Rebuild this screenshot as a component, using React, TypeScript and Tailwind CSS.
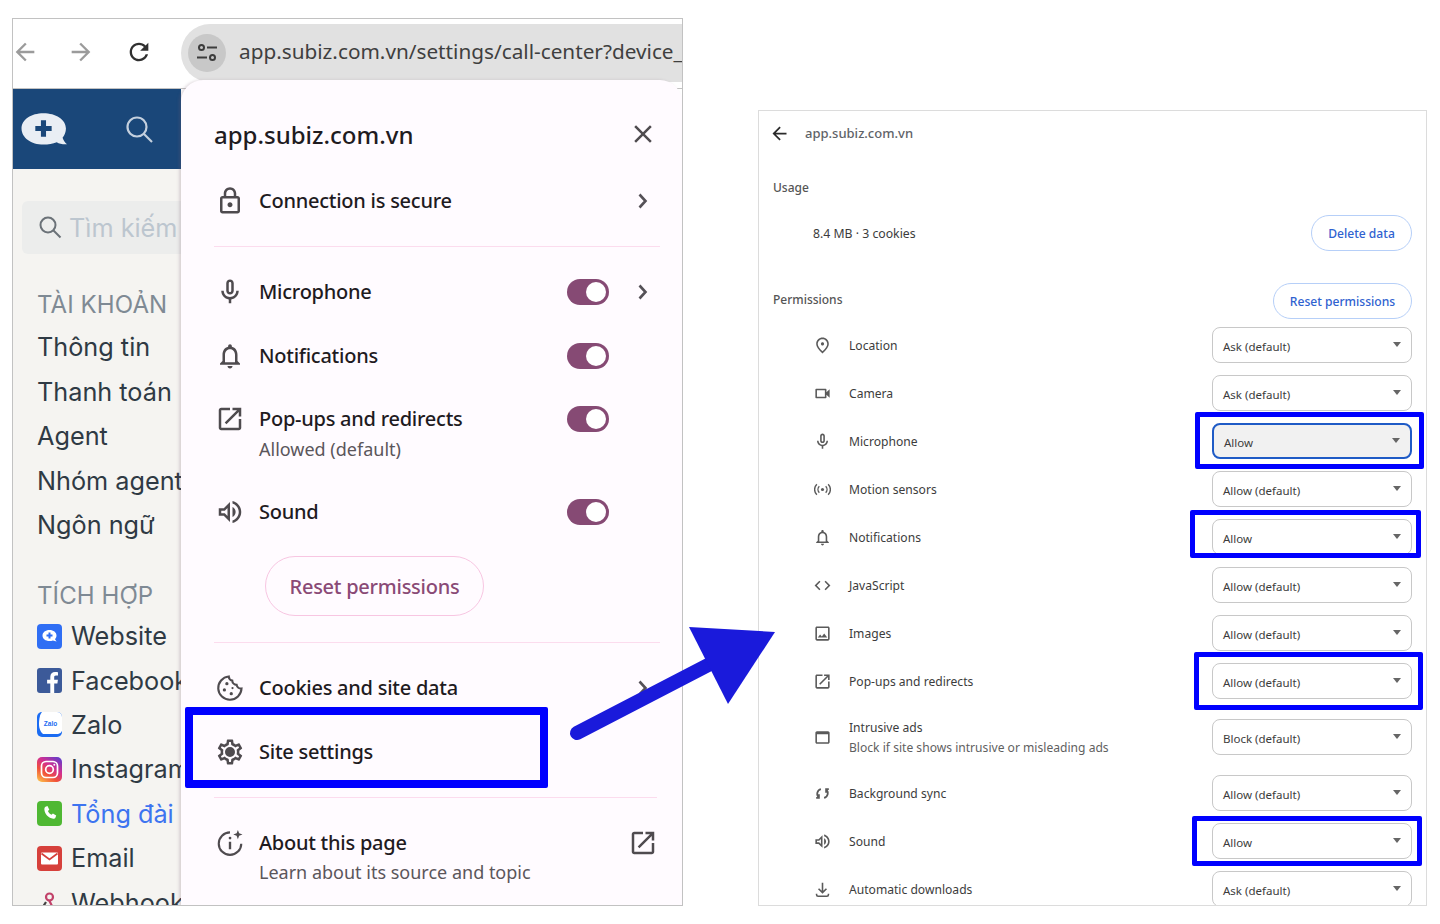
import React from "react";

const P = {
  mic: "M12 14c1.66 0 3-1.34 3-3V5c0-1.66-1.34-3-3-3S9 3.34 9 5v6c0 1.66 1.34 3 3 3zm-1-9c0-.55.45-1 1-1s1 .45 1 1v6c0 .55-.45 1-1 1s-1-.45-1-1V5zm6 6c0 2.76-2.24 5-5 5s-5-2.24-5-5H5c0 3.53 2.61 6.43 6 6.92V21h2v-3.08c3.39-.49 6-3.39 6-6.92h-2z",
  bell: "M12 22c1.1 0 2-.9 2-2h-4c0 1.1.9 2 2 2zm6-6v-5c0-3.07-1.63-5.64-4.5-6.32V4c0-.83-.67-1.5-1.5-1.5s-1.5.67-1.5 1.5v.68C7.64 5.36 6 7.92 6 11v5l-2 2v1h16v-1l-2-2zm-2 1H8v-6c0-2.48 1.51-4.5 4-4.5s4 2.02 4 4.5v6z",
  open: "M19 19H5V5h7V3H5c-1.11 0-2 .9-2 2v14c0 1.1.89 2 2 2h14c1.1 0 2-.9 2-2v-7h-2v7zM14 3v2h3.59l-9.83 9.83 1.41 1.41L19 6.41V10h2V3h-7z",
  sound: "M3 9v6h4l5 5V4L7 9H3zm7-.17v6.34L7.83 13H5v-2h2.83L10 8.83zM16.5 12c0-1.77-1.02-3.29-2.5-4.03v8.05c1.48-.73 2.5-2.25 2.5-4.02zM14 3.23v2.06c2.89.86 5 3.54 5 6.71s-2.11 5.85-5 6.71v2.06c4.01-.91 7-4.49 7-8.77 0-4.28-2.99-7.86-7-8.77z",
  lock: "M18 8h-1V6c0-2.76-2.24-5-5-5S7 3.24 7 6v2H6c-1.1 0-2 .9-2 2v10c0 1.1.9 2 2 2h12c1.1 0 2-.9 2-2V10c0-1.1-.9-2-2-2zM9 6c0-1.66 1.34-3 3-3s3 1.34 3 3v2H9V6zm9 14H6V10h12v10zm-6-3c1.1 0 2-.9 2-2s-.9-2-2-2-2 .9-2 2 .9 2 2 2z",
  gear: "M19.43 12.98c.04-.32.07-.64.07-.98s-.03-.66-.07-.98l2.11-1.65c.19-.15.24-.42.12-.64l-2-3.46c-.12-.22-.39-.3-.61-.22l-2.49 1c-.52-.4-1.08-.73-1.69-.98l-.38-2.65C14.46 2.18 14.25 2 14 2h-4c-.25 0-.46.18-.49.42l-.38 2.65c-.61.25-1.17.59-1.69.98l-2.49-1c-.23-.09-.49 0-.61.22l-2 3.46c-.13.22-.07.49.12.64l2.11 1.65c-.04.32-.07.65-.07.98s.03.66.07.98l-2.11 1.65c-.19.15-.24.42-.12.64l2 3.46c.12.22.39.3.61.22l2.49-1c.52.4 1.08.73 1.69.98l.38 2.65c.03.24.24.42.49.42h4c.25 0 .46-.18.49-.42l.38-2.65c.61-.25 1.17-.59 1.69-.98l2.49 1c.23.09.49 0 .61-.22l2-3.46c.12-.22.07-.49-.12-.64l-2.11-1.65zM17.45 11.27c.04.31.05.52.05.73 0 .21-.02.43-.05.73l-.14 1.13.89.7 1.08.84-.7 1.21-1.27-.51-1.04-.42-.9.68c-.43.32-.84.56-1.25.73l-1.06.43-.16 1.13-.2 1.35h-1.4l-.19-1.35-.16-1.13-1.06-.43c-.43-.18-.83-.41-1.23-.71l-.91-.7-1.06.43-1.27.51-.7-1.21 1.08-.84.89-.7-.14-1.13c-.03-.31-.05-.54-.05-.74s.02-.43.05-.73l.14-1.13-.89-.7-1.08-.84.7-1.21 1.27.51 1.04.42.9-.68c.43-.32.84-.56 1.25-.73l1.06-.43.16-1.13.2-1.35h1.39l.19 1.35.16 1.13 1.06.43c.43.18.83.41 1.23.71l.91.7 1.06-.43 1.27-.51.7 1.21-1.07.85-.89.7.14 1.13zM12 8a4 4 0 1 0 0 8 4 4 0 0 0 0-8z",
  pin: "M12 12c-1.1 0-2-.9-2-2s.9-2 2-2 2 .9 2 2-.9 2-2 2zm6-1.8C18 6.57 15.35 4 12 4s-6 2.57-6 6.2c0 2.34 1.95 5.44 6 9.14 4.05-3.7 6-6.8 6-9.14zM12 2c4.2 0 8 3.22 8 8.2 0 3.32-2.67 7.25-8 11.8-5.33-4.55-8-8.48-8-11.8C4 5.22 7.8 2 12 2z",
  cam: "M15 8v8H5V8h10m1-2H4c-.55 0-1 .45-1 1v10c0 .55.45 1 1 1h12c.55 0 1-.45 1-1v-3.5l4 4v-11l-4 4V7c0-.55-.45-1-1-1z",
  code: "M9.4 16.6 4.8 12l4.6-4.6L8 6l-6 6 6 6 1.4-1.4zm5.2 0 4.6-4.6-4.6-4.6L16 6l6 6-6 6-1.4-1.4z",
  image: "M19 5v14H5V5h14m0-2H5c-1.1 0-2 .9-2 2v14c0 1.1.9 2 2 2h14c1.1 0 2-.9 2-2V5c0-1.1-.9-2-2-2zm-4.86 8.86-3 3.87L9 13.14 6 17h12l-3.86-5.14z",
  ads: "M19 4H5c-1.11 0-2 .9-2 2v12c0 1.1.89 2 2 2h14c1.1 0 2-.9 2-2V6c0-1.1-.89-2-2-2zm0 14H5V8h14v10z",
  back: "M20 11H7.83l5.59-5.59L12 4l-8 8 8 8 1.41-1.41L7.83 13H20v-2z",
  forward: "M4 11h12.170l-5.590-5.590L12 4l8 8-8 8-1.410-1.410L16.170 13H4z",
  close: "M19 6.41 17.59 5 12 10.59 6.41 5 5 6.41 10.59 12 5 17.59 6.41 19 12 13.41 17.59 19 19 17.59 13.41 12z",
  refresh: "M17.65 6.35C16.2 4.9 14.21 4 12 4c-4.42 0-7.99 3.58-7.99 8s3.57 8 7.99 8c3.73 0 6.84-2.55 7.73-6h-2.08c-.82 2.33-3.04 4-5.65 4-3.31 0-6-2.69-6-6s2.69-6 6-6c1.66 0 3.14.69 4.22 1.78L13 11h7V4l-2.35 2.35z",
};

function Ic({ d, size = 30, color = "#4f4b4f" }: { d: string; size?: number; color?: string }) {
  return (
    <svg width={size} height={size} viewBox="0 0 24 24" fill={color} fillRule="evenodd" className="shrink-0">
      <path d={d} />
    </svg>
  );
}

function Chevron() {
  return (
    <svg width="30" height="30" viewBox="0 0 30 30" fill="none" stroke="#555157" strokeWidth="2.6" className="shrink-0">
      <path d="M11.5 8.5 17.5 15 11.5 21.5" />
    </svg>
  );
}

function CookieIcon() {
  return (
    <svg width="30" height="30" viewBox="0 0 24 24" fill="none" stroke="#4f4b4f" strokeWidth="1.7">
      <path d="M11 2.8a9.3 9.3 0 1 0 10.2 9.6 3.6 3.6 0 0 1-3.9-2.9 3.6 3.6 0 0 1-3.5-3.4A3.6 3.6 0 0 1 11 2.8z" />
      <circle cx="9.5" cy="8.5" r="1.3" fill="#4f4b4f" stroke="none" />
      <circle cx="7.5" cy="13.5" r="1.3" fill="#4f4b4f" stroke="none" />
      <circle cx="13" cy="16.5" r="1.3" fill="#4f4b4f" stroke="none" />
      <circle cx="14" cy="12" r="0.9" fill="#4f4b4f" stroke="none" />
    </svg>
  );
}

function AboutIcon() {
  return (
    <svg width="30" height="30" viewBox="0 0 24 24" fill="none" stroke="#4f4b4f" strokeWidth="1.7">
      <path d="M12 3.5a9 9 0 1 0 9 9" />
      <path d="M12 11v6" strokeWidth="1.9" />
      <circle cx="12" cy="8" r="1.1" fill="#4f4b4f" stroke="none" />
      <path d="M18.3 1.5l1 2.7 2.7 1-2.7 1-1 2.7-1-2.7-2.7-1 2.7-1z" fill="#4f4b4f" stroke="none" />
    </svg>
  );
}

function Toggle({ extra = "" }: { extra?: string }) {
  return (
    <div className={"flex h-[26px] w-[42px] shrink-0 items-center justify-end rounded-full bg-[#864a74] pr-[3px] " + extra}>
      <div className="h-[20px] w-[20px] rounded-full bg-white" />
    </div>
  );
}

const labelCls = "text-[20px] font-medium tracking-[-0.25px] text-[#1f1b1f]";

function PopRow({ icon, label, right, chevron }: { icon: React.ReactNode; label: string; right?: React.ReactNode; chevron?: boolean }) {
  return (
    <div className="flex h-[64px] items-center pl-[33px] pr-6">
      <div className="flex w-8 justify-center">{icon}</div>
      <div className={"ml-[13px] flex-1 " + labelCls}>{label}</div>
      {right}
      <div className="ml-[19px] w-[30px]">{chevron ? <Chevron /> : null}</div>
    </div>
  );
}

function Popup() {
  return (
    <div className="relative z-10 -mt-[9px] h-[826px] w-[501px] shrink-0 rounded-t-[22px] bg-[#fffbff] shadow-[-2px_0_3px_rgba(120,90,110,0.22)]">
      <div className="flex h-[100px] items-start pl-[33px] pr-6 pt-[35px]">
        <div className="flex-1 text-[24px] font-medium leading-[40px] text-[#1f1b1f]">app.subiz.com.vn</div>
        <div className="mt-[4px]"><Ic d={P.close} color="#4f4b4f" /></div>
      </div>
      <div className="flex h-[42px] items-center pl-[33px] pr-6">
        <div className="flex w-8 justify-center"><Ic d={P.lock} /></div>
        <div className={"ml-[13px] flex-1 " + labelCls}>Connection is secure</div>
        <Chevron />
      </div>
      <div className="ml-[33px] mt-[24px] mb-[13px] h-px w-[446px] bg-[#fcdcee]" />
      <PopRow icon={<Ic d={P.mic} />} label="Microphone" right={<Toggle />} chevron />
      <PopRow icon={<Ic d={P.bell} />} label="Notifications" right={<Toggle />} />
      <div className="flex h-[92px] items-start pl-[33px] pr-6 pt-[16px]">
        <div className="flex w-8 justify-center"><Ic d={P.open} /></div>
        <div className="ml-[13px] flex-1">
          <div className={"leading-[30px] " + labelCls}>Pop-ups and redirects</div>
          <div className="text-[18px] leading-[30px] text-[#5b565b]">Allowed (default)</div>
        </div>
        <Toggle extra="mt-[2px]" />
        <div className="ml-[19px] w-[30px]" />
      </div>
      <PopRow icon={<Ic d={P.sound} />} label="Sound" right={<Toggle />} />
      <div className="ml-[84px] mt-[12px] flex h-[60px] w-[219px] items-center justify-center rounded-full border border-[#f8c6e2] pt-[2px] text-[20px] font-medium tracking-[-0.25px] text-[#8a4a76]">
        Reset permissions
      </div>
      <div className="ml-[33px] mt-[26px] mb-[13px] h-px w-[446px] bg-[#fcdcee]" />
      <PopRow icon={<CookieIcon />} label="Cookies and site data" chevron />
      <PopRow icon={<Ic d={P.gear} />} label="Site settings" />
      <div className="ml-[33px] mt-[13px] h-px w-[443px] bg-[#fcdcee]" />
      <div className="flex items-start pl-[33px] pr-6 pt-[30px]">
        <div className="flex w-8 justify-center"><AboutIcon /></div>
        <div className="ml-[13px] flex-1">
          <div className={"leading-[30px] " + labelCls}>About this page</div>
          <div className="-mt-[1px] text-[18px] leading-[30px] text-[#5b565b]">Learn about its source and topic</div>
        </div>
        <Ic d={P.open} />
      </div>
    </div>
  );
}

function LogoWebsite() {
  return (
    <svg width="25" height="25" viewBox="0 0 25 25" className="shrink-0">
      <rect width="25" height="25" rx="4" fill="#2f6ef4" />
      <path d="M12.5 6c4 0 7 2.3 7 5.6 0 1.5-.6 2.7-1.5 3.6l1.6 2.4-3.7-1.1c-1.1.4-2.2.6-3.4.6-4 0-7-2.2-7-5.5S8.5 6 12.5 6z" fill="#fff" />
      <path d="M12.5 8.5v6M9.5 11.5h6" stroke="#2f6ef4" strokeWidth="2" />
    </svg>
  );
}
function LogoFacebook() {
  return (
    <svg width="25" height="25" viewBox="0 0 25 25" className="shrink-0">
      <rect width="25" height="25" rx="3" fill="#3c5a99" />
      <path d="M17.2 25v-9.6h3.2l.5-3.7h-3.700V9.300c0-1.100.3-1.800 1.800-1.800h2V4.200c-.4 0-1.500-.2-2.900-.2-2.800 0-4.800 1.700-4.800 4.900v2.800h-3.200v3.700h3.200V25z" fill="#fff" />
    </svg>
  );
}
function LogoZalo() {
  return (
    <svg width="25" height="25" viewBox="0 0 25 25" className="shrink-0">
      <rect width="25" height="25" rx="5" fill="#1b6cf2" />
      <path d="M5 0h15a5 5 0 0 1 5 5v14a5 5 0 0 1-4 3H6c-2-1.5-4-5-4-10S3 2 5 0z" fill="#fff" />
      <text x="13.5" y="14" fontSize="6.500" textAnchor="middle" fill="#1b6cf2" fontWeight="700" fontFamily="Liberation Sans, sans-serif">Zalo</text>
    </svg>
  );
}
function LogoInstagram() {
  return (
    <svg width="25" height="25" viewBox="0 0 25 25" className="shrink-0">
      <defs>
        <linearGradient id="ig" x1="0.1" y1="1" x2="0.8" y2="0">
          <stop offset="0" stopColor="#fdc04a" />
          <stop offset="0.35" stopColor="#f0503a" />
          <stop offset="0.65" stopColor="#d12f91" />
          <stop offset="1" stopColor="#6a3bc6" />
        </linearGradient>
      </defs>
      <rect width="25" height="25" rx="5" fill="url(#ig)" />
      <rect x="4.5" y="4.5" width="16" height="16" rx="4.5" fill="none" stroke="#fff" strokeWidth="1.7" />
      <circle cx="12.5" cy="12.5" r="3.8" fill="none" stroke="#fff" strokeWidth="1.7" />
      <circle cx="17.3" cy="7.7" r="1" fill="#fff" />
    </svg>
  );
}
function LogoPhone() {
  return (
    <svg width="25" height="25" viewBox="0 0 25 25" className="shrink-0">
      <rect width="25" height="25" rx="4" fill="#4fb833" />
      <path d="M8.5 5.800l2-.8 1.800 3.700-1.400 1.300c.6 1.500 1.900 3 3.600 3.800l1.400-1.400 3.300 2-.8 2.300c-.4.800-1.300 1.200-2.200 1.100-4.600-.7-8.300-4.400-8.800-9-.1-1 .2-2.500 1.100-3z" fill="#fff" />
    </svg>
  );
}
function LogoEmail() {
  return (
    <svg width="25" height="25" viewBox="0 0 25 25" className="shrink-0">
      <rect width="25" height="25" rx="4" fill="#d6403b" />
      <rect x="4" y="6.5" width="17" height="12" rx="1" fill="#fff" />
      <path d="M4.5 7.500l8 6 8-6" fill="none" stroke="#d6403b" strokeWidth="1.7" />
    </svg>
  );
}
function LogoWebhook() {
  return (
    <svg width="25" height="25" viewBox="0 0 25 25" fill="none" strokeWidth="2.2" className="shrink-0">
      <circle cx="12.5" cy="7" r="3.5" stroke="#c2426a" />
      <path d="M12 10l4 8h6" stroke="#c2426a" />
      <path d="M9 12l-5 8h11" stroke="#444" />
    </svg>
  );
}

function Sidebar() {
  const account = ["Thông tin", "Thanh toán", "Agent", "Nhóm agent", "Ngôn ngữ"];
  const integ: [React.ReactNode, string, string][] = [
    [<LogoWebsite />, "Website", "text-[#2f3a44]"],
    [<LogoFacebook />, "Facebook", "text-[#2f3a44]"],
    [<LogoZalo />, "Zalo", "text-[#2f3a44]"],
    [<LogoInstagram />, "Instagram", "text-[#2f3a44]"],
    [<LogoPhone />, "Tổng đài", "text-[#3d74f0]"],
    [<LogoEmail />, "Email", "text-[#2f3a44]"],
    [<LogoWebhook />, "Webhook", "text-[#2f3a44]"],
  ];
  return (
    <div className="h-[817px] w-[168px] shrink-0 overflow-hidden bg-[#f5f4f1] whitespace-nowrap [font-family:Inter,sans-serif]">
      <div className="flex h-[80px] items-center bg-[#1a4779] pl-[7px]">
        <svg width="49" height="41" viewBox="0 0 48 40" className="shrink-0">
          <path d="M23 4c12 0 22 6 22 15 0 3.500-1.300 6.500-3.300 9 .6 2 2 4.500 4.300 6.500-4 .3-7.500-.5-10-2-3.800 1.500-8.300 2.300-13 2.300C11 34.800 1.500 28 1.500 19S11 4 23 4z" fill="#e9eef4" />
          <path d="M23 11v16M15 19h16" stroke="#1a4779" strokeWidth="5" />
        </svg>
        <svg className="ml-[55px] shrink-0" width="30" height="30" viewBox="0 0 30 30" fill="none" stroke="#c4d0de" strokeWidth="2.2">
          <circle cx="13" cy="13" r="9.5" />
          <path d="M20 20l8 8" />
        </svg>
      </div>
      <div className="ml-[9px] mt-[32px] flex h-[53px] items-center rounded-l-md bg-[#ecedec] pl-[16px]">
        <svg width="24" height="24" viewBox="0 0 24 24" fill="none" stroke="#6b7278" strokeWidth="2" className="-mt-[2px] shrink-0">
          <circle cx="10" cy="10" r="7.5" />
          <path d="M15.500 15.500l7 7" />
        </svg>
        <span className="ml-[7px] pt-[3px] text-[25.25px] text-[#bcc6cf]">Tìm kiếm</span>
      </div>
      <div className="mt-[28px] flex h-[43px] items-center pl-[24px] pt-[2px] text-[24px] tracking-[0.1px] text-[#7f8a94]">TÀI KHOẢN</div>
      {account.map((t) => (
        <div key={t} className="flex h-[44.5px] items-center pl-[24px] pt-[2px] text-[25.25px] text-[#2f3a44]">{t}</div>
      ))}
      <div className="mt-[27.5px] flex h-[39px] items-center pl-[24px] pt-[2px] text-[24px] tracking-[0.1px] text-[#7f8a94]">TÍCH HỢP</div>
      {integ.map(([logo, t, cls]) => (
        <div key={t} className="flex h-[44.4px] items-center pl-[24px]">
          {logo}
          <span className={"ml-[9px] pt-[2px] text-[25.25px] " + cls}>{t}</span>
        </div>
      ))}
    </div>
  );
}

function LeftWindow() {
  return (
    <div className="ml-[12px] mt-[18px] h-[888px] w-[671px] shrink-0 overflow-hidden border border-[#c2c2c2] bg-white [font-family:'Noto_Sans',sans-serif]">
      <div className="flex h-[70px] items-start border-b border-[#c2c2c2] bg-white">
        <div className="-ml-[2px] mt-[19px] flex items-center">
          <Ic d={P.back} size={28} color="#9b9b9b" />
          <div className="ml-[28px]"><Ic d={P.forward} size={28} color="#9b9b9b" /></div>
          <div className="ml-[30px]"><Ic d={P.refresh} size={28} color="#303030" /></div>
        </div>
        <div className="ml-[28px] mt-[5px] flex h-[58px] min-w-0 flex-1 items-center overflow-hidden whitespace-nowrap rounded-l-full bg-[#e1e1e1] pl-[7px]">
          <div className="flex h-[38px] w-[38px] shrink-0 items-center justify-center rounded-full bg-[#c8c8c8]">
            <svg width="24" height="24" viewBox="0 0 24 24" fill="none" stroke="#3c3c3c" strokeWidth="2">
              <circle cx="6.5" cy="6.5" r="2.5" />
              <path d="M12 6.500h10M2 16.500h10" />
              <circle cx="17.5" cy="16.5" r="2.5" />
            </svg>
          </div>
          <span className="ml-[13px] pb-[3px] text-[20.75px] text-[#3f3f3f]">app.subiz.com.vn/settings/call-center?device_</span>
        </div>
      </div>
      <div className="flex">
        <Sidebar />
        <Popup />
      </div>
    </div>
  );
}

function Select({ value, focus }: { value: string; focus?: boolean }) {
  return (
    <div className={"flex h-[36px] w-[200px] shrink-0 items-center justify-between rounded-lg px-[10px] " + (focus ? "border-2 border-[#1f5bc6] bg-[#f1f1f1]" : "border border-[#c8c8c8] bg-white")}>
      <span className="pt-[3px] text-[11.5px] text-[#3c3c3c]">{value}</span>
      <svg width="8" height="5" viewBox="0 0 10 6" className="-mt-[2px]"><path d="M0 0h10L5 6z" fill="#666" /></svg>
    </div>
  );
}

function PermRow({ icon, label, sub, value, focus, tall }: { icon: React.ReactNode; label: string; sub?: string; value: string; focus?: boolean; tall?: boolean }) {
  return (
    <div className={"flex items-center " + (tall ? "h-[64px]" : "h-[48px]")}>
      <div className="ml-[39px] flex w-[20px] shrink-0 justify-center">{icon}</div>
      <div className="ml-[17px] flex-1 pt-[2px]">
        <div className={"text-[12.1px] text-[#3c3c3c] " + (sub ? "leading-[20px]" : "")}>{label}</div>
        {sub ? <div className="text-[12.1px] leading-[20px] text-[#5f5f5f]">{sub}</div> : null}
      </div>
      <Select value={value} focus={focus} />
    </div>
  );
}

const I = ({ d }: { d: string }) => <Ic d={d} size={19} color="#5a5a5a" />;

function RightWindow() {
  return (
    <div className="ml-[75px] mt-[110px] h-[796px] w-[669px] shrink-0 overflow-hidden border border-[#dcdcdc] bg-white pl-[14px] pr-[14px] [font-family:'Noto_Sans',sans-serif]">
      <div className="flex h-[44px] items-center">
        <div className="-ml-[4px]"><Ic d={P.back} size={21} color="#2b2b2b" /></div>
        <span className="ml-[15px] pt-[2px] text-[13px] font-medium text-[#5f6368]">app.subiz.com.vn</span>
      </div>
      <div className="mt-[22px] flex h-[20px] items-center pt-[2px] text-[12px] font-medium text-[#555]">Usage</div>
      <div className="mt-[18px] flex h-[36px] items-center justify-between">
        <span className="ml-[40px] pt-[2px] text-[12.25px] text-[#3c3c3c]">8.4 MB · 3 cookies</span>
        <div className="flex h-[36px] w-[101px] items-center justify-center rounded-full border border-[#b6cff8] pt-[2px] text-[12.1px] font-medium text-[#2f62d0]">Delete data</div>
      </div>
      <div className="mt-[32px] flex h-[36px] justify-between">
        <span className="mt-[8px] text-[12px] font-medium text-[#555]">Permissions</span>
        <div className="flex h-[36px] w-[139px] items-center justify-center rounded-full border border-[#b6cff8] pt-[2px] text-[12.1px] font-medium text-[#2f62d0]">Reset permissions</div>
      </div>
      <div className="mt-[2px]">
        <PermRow icon={<I d={P.pin} />} label="Location" value="Ask (default)" />
        <PermRow icon={<I d={P.cam} />} label="Camera" value="Ask (default)" />
        <PermRow icon={<I d={P.mic} />} label="Microphone" value="Allow" focus />
        <PermRow
          icon={
            <svg width="17" height="17" viewBox="0 0 24 24" fill="none" stroke="#5a5a5a" strokeWidth="2">
              <circle cx="12" cy="12" r="2.2" fill="#5a5a5a" stroke="none" />
              <path d="M7.5 7.5a6.400 6.400 0 0 0 0 9M16.5 7.5a6.400 6.400 0 0 1 0 9M4 4.500a10.600 10.600 0 0 0 0 15M20 4.500a10.600 10.600 0 0 1 0 15" />
            </svg>
          }
          label="Motion sensors"
          value="Allow (default)"
        />
        <PermRow icon={<I d={P.bell} />} label="Notifications" value="Allow" />
        <PermRow icon={<I d={P.code} />} label="JavaScript" value="Allow (default)" />
        <PermRow icon={<I d={P.image} />} label="Images" value="Allow (default)" />
        <PermRow icon={<I d={P.open} />} label="Pop-ups and redirects" value="Allow (default)" />
        <PermRow icon={<I d={P.ads} />} label="Intrusive ads" sub="Block if site shows intrusive or misleading ads" value="Block (default)" tall />
        <PermRow
          icon={
            <svg width="19" height="19" viewBox="0 0 24 24" fill="none" stroke="#5a5a5a" strokeWidth="2.2">
              <path d="M10 6.500a6 6 0 0 0-2.500 10.500M7.500 13v4.500H4" />
              <path d="M14 17.500a6 6 0 0 0 2.500-10.500M16.500 11V6.500H20" />
            </svg>
          }
          label="Background sync"
          value="Allow (default)"
        />
        <PermRow icon={<I d={P.sound} />} label="Sound" value="Allow" />
        <PermRow
          icon={
            <svg width="19" height="19" viewBox="0 0 24 24" fill="none" stroke="#5a5a5a" strokeWidth="2">
              <path d="M12 3.500v12M7 11l5 5 5-5M4.500 17.500v1a2 2 0 0 0 2 2h11a2 2 0 0 0 2-2v-1" />
            </svg>
          }
          label="Automatic downloads"
          value="Ask (default)"
        />
      </div>
    </div>
  );
}

export default function App() {
  return (
    <div className="relative flex h-[924px] w-[1440px] items-start overflow-hidden bg-white">
      <LeftWindow />
      <RightWindow />
      <div className="absolute left-[185px] top-[707px] z-20 h-[81px] w-[363px] rounded-[2px] border-[8px] border-[#0000ff]" />
      <div className="absolute left-[1195px] top-[412px] z-20 h-[57px] w-[229px] rounded-[2px] border-[5px] border-[#0000ff]" />
      <div className="absolute left-[1190px] top-[510px] z-20 h-[48px] w-[231px] rounded-[2px] border-[5px] border-[#0000ff]" />
      <div className="absolute left-[1194px] top-[652px] z-20 h-[58px] w-[229px] rounded-[2px] border-[5px] border-[#0000ff]" />
      <div className="absolute left-[1192px] top-[816px] z-20 h-[50px] w-[230px] rounded-[2px] border-[5px] border-[#0000ff]" />
      <svg className="absolute left-[560px] top-[620px] z-30" width="230" height="130" viewBox="560 620 230 130">
        <path d="M577 733 712 663" stroke="#1a1adb" strokeWidth="14" strokeLinecap="round" fill="none" />
        <path d="M689 627 775 632 728 704z" fill="#1a1adb" />
      </svg>
    </div>
  );
}
